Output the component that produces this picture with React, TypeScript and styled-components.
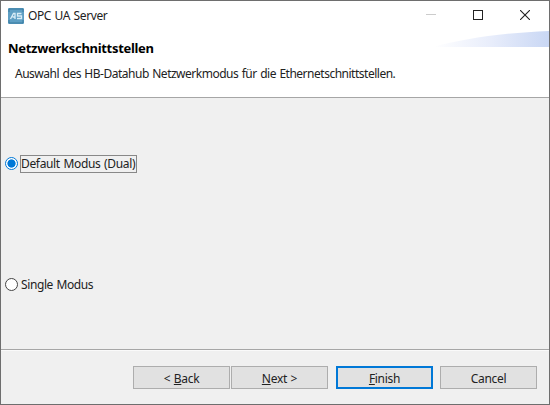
import React from "react";
import styled, { createGlobalStyle } from "styled-components";

const GlobalStyle = createGlobalStyle`
  * { box-sizing: border-box; }
  body { margin: 0; overflow: hidden; }
`;

const Window = styled.div`
  width: 550px;
  height: 405px;
  display: flex;
  flex-direction: column;
  background: #f0f0f0;
  border: 1px solid #6e6e6e;
  font-family: "Noto Sans", "Open Sans", sans-serif;
  font-size: 12px;
  line-height: 16px;
  color: #222;
`;

const Label = styled.span<{ $spacing: number }>`
  letter-spacing: ${(p) => p.$spacing}px;
  word-spacing: 0.8px;
  white-space: nowrap;
`;

const TitleBar = styled.header`
  height: 29px;
  display: flex;
  align-items: center;
  padding-left: 7px;
  background: #fff;
`;

const AppIcon = styled.svg`
  width: 16px;
  height: 16px;
  margin-right: 4px;
`;

const Controls = styled.div`
  display: flex;
  margin-left: auto;
  padding-right: 1px;
`;

const ControlButton = styled.button`
  width: 47px;
  height: 29px;
  display: grid;
  place-items: center;
  padding: 0 0 1px;
  border: 0;
  background: none;
`;

const Banner = styled.section`
  height: 68px;
  display: flex;
  justify-content: space-between;
  background: #fff;
  border-bottom: 1px solid #a6a6a6;
`;

const BannerText = styled.div`
  padding: 10px 0 0 7px;
`;

const Heading = styled.h1`
  margin: 0;
  font-size: 13px;
  line-height: 16px;
  font-weight: 700;
  color: #000;
`;

const Description = styled.p`
  margin: 10px 0 0 7px;
`;

const Swoosh = styled.svg`
  width: 116px;
  height: 17px;
  flex: none;
`;

const Options = styled.main`
  height: 251px;
  display: flex;
  flex-direction: column;
  padding: 57px 0 0 4px;
  gap: 103px;
`;

const Option = styled.label`
  height: 18px;
  display: flex;
  align-items: center;
  gap: 2px;
`;

const Radio = styled.span<{ $checked?: boolean }>`
  width: 13px;
  height: 13px;
  margin-bottom: 1px;
  border-radius: 50%;
  border: 1px solid ${(p) => (p.$checked ? "#0078d7" : "#444")};
  background: ${(p) =>
    p.$checked ? "radial-gradient(circle, #0078d7 3.7px, #fff 4.5px)" : "#fff"};
`;

const OptionText = styled.span<{ $focused?: boolean }>`
  height: 18px;
  display: flex;
  align-items: center;
  border: 1px solid ${(p) => (p.$focused ? "#888" : "transparent")};
  width: 117px;
`;

const Footer = styled.footer`
  flex: 1;
  display: flex;
  align-items: flex-start;
  padding: 16px 0 0 132px;
  border-top: 1px solid #a6a6a6;
  box-shadow: inset 0 1px 0 #fafafa;
`;

const Button = styled.button<{ $primary?: boolean; $gap?: number }>`
  width: 97px;
  height: 23px;
  margin-left: ${(p) => p.$gap ?? 0}px;
  padding: ${(p) => (p.$primary ? "2px 0 0" : "2px 0 0")};
  display: flex;
  align-items: center;
  justify-content: center;
  background: #e1e1e1;
  border: ${(p) => (p.$primary ? "2px solid #0078d7" : "1px solid #adadad")};
  font: inherit;
  color: inherit;
`;

const Mnemonic = styled.u`
  text-underline-offset: 1px;
  text-decoration-thickness: 1px;
  text-decoration-skip-ink: none;
`;

export default function App() {
  return (
    <>
      <GlobalStyle />
      <Window>
        <TitleBar>
          <AppIcon viewBox="0 0 16 16">
            <rect width="16" height="16" rx="1" fill="#5e9fc4" />
            <path d="M1 4V1h14v3M1 12v3h14v-3" fill="none" stroke="#397a9f" />
            <path d="M2.500 11l3-5.500H7V11M4.500 9H7M13.500 5.500h-4v2.500h4v2.500H9" fill="none" stroke="#d9edf7" strokeWidth="1.300" />
          </AppIcon>
          <Label $spacing={-0.4}>OPC UA Server</Label>
          <Controls>
            <ControlButton aria-label="Minimize">
              <svg width="10" height="10"><path d="M0 4.500h10" stroke="#ccc" /></svg>
            </ControlButton>
            <ControlButton aria-label="Maximize">
              <svg width="10" height="10"><rect x=".5" y=".5" width="9" height="9" fill="none" stroke="#222" /></svg>
            </ControlButton>
            <ControlButton aria-label="Close">
              <svg width="10" height="10"><path d="M0 0l10 10M10 0L0 10" stroke="#222" strokeWidth="1.100" /></svg>
            </ControlButton>
          </Controls>
        </TitleBar>
        <Banner>
          <BannerText>
            <Heading><Label $spacing={-0.3}>Netzwerkschnittstellen</Label></Heading>
            <Description>
              <Label $spacing={-0.49}>Auswahl des HB-Datahub Netzwerkmodus für die Ethernetschnittstellen.</Label>
            </Description>
          </BannerText>
          <Swoosh viewBox="0 0 116 17">
            <defs>
              <linearGradient id="swoosh">
                <stop offset="0" stopColor="#fff" />
                <stop offset=".5" stopColor="#e8edfb" />
                <stop offset="1" stopColor="#c9d7f4" />
              </linearGradient>
            </defs>
            <path d="M0 17C30 9 66 3 116 1V17Z" fill="url(#swoosh)" />
          </Swoosh>
        </Banner>
        <Options>
          <Option>
            <Radio $checked />
            <OptionText $focused><Label $spacing={-0.34}>Default Modus (Dual)</Label></OptionText>
          </Option>
          <Option>
            <Radio />
            <OptionText><Label $spacing={-0.4}>Single Modus</Label></OptionText>
          </Option>
        </Options>
        <Footer>
          <Button><Label $spacing={-0.3}>&lt; <Mnemonic>B</Mnemonic>ack</Label></Button>
          <Button $gap={1}><Label $spacing={-0.3}><Mnemonic>N</Mnemonic>ext &gt;</Label></Button>
          <Button $primary $gap={8}><Label $spacing={-0.3}><Mnemonic>F</Mnemonic>inish</Label></Button>
          <Button $gap={7}><Label $spacing={-0.3}>Cancel</Label></Button>
        </Footer>
      </Window>
    </>
  );
}
